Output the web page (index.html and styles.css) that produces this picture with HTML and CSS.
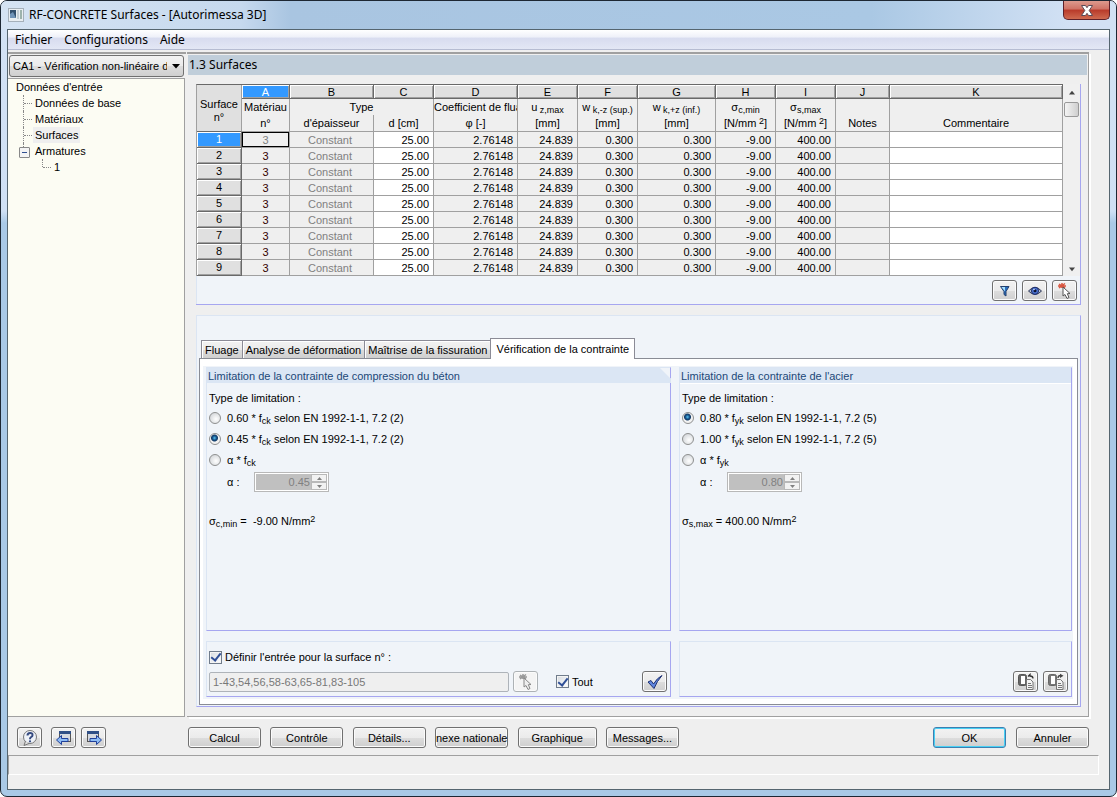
FILE: index.html
```html
<!DOCTYPE html>
<html lang="fr">
<head>
<meta charset="utf-8">
<title>RF-CONCRETE Surfaces - [Autorimessa 3D]</title>
<link rel="stylesheet" href="styles.css">
</head>
<body>
<div class="window">
  <header class="titlebar">
    <svg class="app-icon" width="16" height="14" viewBox="0 0 16 14"><rect x=".5" y=".5" width="15" height="13" fill="#e9eef2" stroke="#a5b0ba"/><rect x="2" y="2" width="6" height="8" fill="#33506f"/><path d="M2 10V6l3-2 3 6z" fill="#6f93b8"/><rect x="9" y="2" width="2" height="9" fill="#c2ccd3"/><rect x="12" y="2" width="2" height="9" fill="#9db3ac"/></svg>
    <h1>RF-CONCRETE Surfaces - [Autorimessa 3D]</h1>
    <button class="close" aria-label="Fermer"><svg width="12" height="11" viewBox="0 0 12 11"><path d="M.5.5h4L6 2.700 7.500.5h4L8.200 5.500l3.300 5h-4L6 8.300 4.500 10.500h-4l3.300-5z" fill="#fff" stroke="#5b4a56"/></svg></button>
  </header>
  <div class="client">
    <nav class="menubar"><button>Fichier</button><button>Configurations</button><button>Aide</button></nav>
    <div class="workspace">
      <aside class="sidebar">
        <div class="combo">
          <select aria-label="Cas de calcul"><option>CA1 - Vérification non-linéaire du</option></select>
          <svg width="8" height="5" viewBox="0 0 8 5"><path d="M0 0h8L4 4.500z" fill="#000"/></svg>
        </div>
        <div class="tree">
          <div class="node root">Données d'entrée</div>
          <ul>
            <li><span class="node">Données de base</span></li>
            <li><span class="node">Matériaux</span></li>
            <li><span class="node selected">Surfaces</span></li>
            <li class="open"><span class="node">Armatures</span>
              <ul><li><span class="node">1</span></li></ul>
            </li>
          </ul>
        </div>
      </aside>
      <main class="panel">
        <h2>1.3 Surfaces</h2>
        <section class="group data">
          <div class="grid-wrap">
            <table>
              <colgroup><col class="c45"><col class="c48"><col class="c84"><col class="c60"><col class="c84"><col class="c60"><col class="c60"><col class="c78"><col class="c60"><col class="c60"><col class="c54"><col></colgroup>
              <thead>
                <tr class="letters"><th rowspan="3" class="corner">Surface<br>n°</th><th class="on">A</th><th>B</th><th>C</th><th>D</th><th>E</th><th>F</th><th>G</th><th>H</th><th>I</th><th>J</th><th>K</th></tr>
                <tr class="names"><th>Matériau</th><th colspan="2">Type</th><th class="clip">Coefficient de flua</th><th>u<sub> z,max</sub></th><th>w<sub> k,-z (sup.)</sub></th><th>w<sub> k,+z (inf.)</sub></th><th>σ<sub>c,min</sub></th><th>σ<sub>s,max</sub></th><th></th><th></th></tr>
                <tr class="units"><th>n°</th><th>d'épaisseur</th><th>d [cm]</th><th>φ [-]</th><th>[mm]</th><th>[mm]</th><th>[mm]</th><th>[N/mm<sup> 2</sup>]</th><th>[N/mm<sup> 2</sup>]</th><th>Notes</th><th>Commentaire</th></tr>
              </thead>
              <tbody>
                <tr><th class="on">1</th><td class="focus">3</td><td>Constant</td><td>25.00</td><td>2.76148</td><td>24.839</td><td>0.300</td><td>0.300</td><td>-9.00</td><td>400.00</td><td></td><td></td></tr>
                <tr><th>2</th><td>3</td><td>Constant</td><td>25.00</td><td>2.76148</td><td>24.839</td><td>0.300</td><td>0.300</td><td>-9.00</td><td>400.00</td><td></td><td></td></tr>
                <tr><th>3</th><td>3</td><td>Constant</td><td>25.00</td><td>2.76148</td><td>24.839</td><td>0.300</td><td>0.300</td><td>-9.00</td><td>400.00</td><td></td><td></td></tr>
                <tr><th>4</th><td>3</td><td>Constant</td><td>25.00</td><td>2.76148</td><td>24.839</td><td>0.300</td><td>0.300</td><td>-9.00</td><td>400.00</td><td></td><td></td></tr>
                <tr><th>5</th><td>3</td><td>Constant</td><td>25.00</td><td>2.76148</td><td>24.839</td><td>0.300</td><td>0.300</td><td>-9.00</td><td>400.00</td><td></td><td></td></tr>
                <tr><th>6</th><td>3</td><td>Constant</td><td>25.00</td><td>2.76148</td><td>24.839</td><td>0.300</td><td>0.300</td><td>-9.00</td><td>400.00</td><td></td><td></td></tr>
                <tr><th>7</th><td>3</td><td>Constant</td><td>25.00</td><td>2.76148</td><td>24.839</td><td>0.300</td><td>0.300</td><td>-9.00</td><td>400.00</td><td></td><td></td></tr>
                <tr><th>8</th><td>3</td><td>Constant</td><td>25.00</td><td>2.76148</td><td>24.839</td><td>0.300</td><td>0.300</td><td>-9.00</td><td>400.00</td><td></td><td></td></tr>
                <tr><th>9</th><td>3</td><td>Constant</td><td>25.00</td><td>2.76148</td><td>24.839</td><td>0.300</td><td>0.300</td><td>-9.00</td><td>400.00</td><td></td><td></td></tr>
              </tbody>
            </table>
            <div class="scrollbar">
              <svg width="8" height="5" viewBox="0 0 8 5"><path d="M1 4.500h6L4 .8z" fill="#444"/></svg>
              <div class="thumb"></div>
              <svg class="down" width="8" height="5" viewBox="0 0 8 5"><path d="M1 .5h6L4 4.200z" fill="#444"/></svg>
            </div>
          </div>
          <div class="tools">
            <button class="icon" aria-label="Filtrer"><svg width="16" height="16" viewBox="0 0 16 16"><path d="M3.500 3.500h8.500L9 8.500V13L7 11.500V8.500z" fill="#2b6fc0" stroke="#24406e"/><path d="M4.500 4h3.500v4.500z" fill="#a9e0fb"/></svg></button>
            <button class="icon" aria-label="Afficher"><svg width="16" height="16" viewBox="0 0 16 16"><path d="M1.500 8Q8 .8 14.500 8 8 15 1.500 8z" fill="#b9c3d3" stroke="#2a3558"/><circle cx="8" cy="7.800" r="3.600" fill="#4a72d0" stroke="#1c2b66"/><circle cx="8" cy="7.800" r="1.500" fill="#0a102e"/><circle cx="7" cy="6.500" r=".8" fill="#cfe0ff"/></svg></button>
            <button class="icon" aria-label="Sélectionner"><svg width="16" height="18" viewBox="0 0 16 18"><path d="M2 2l6 4M8 1.500L2 6M5 1v5M1 4h8" stroke="#d8553f" stroke-width="1.500"/><path d="M6 5v9l2-1.500L10 16.500l2-1-1.700-3.800 2.700-.2z" fill="#fff" stroke="#555"/></svg></button>
          </div>
        </section>
        <section class="group details">
          <div class="tabs" role="tablist">
            <button role="tab">Fluage</button><button role="tab">Analyse de déformation</button><button role="tab">Maîtrise de la fissuration</button><button role="tab" class="active" aria-selected="true">Vérification de la contrainte</button>
          </div>
          <div class="page">
            <div class="page-grid">
              <fieldset class="box cut">
                <h3>Limitation de la contrainte de compression du béton</h3>
                <p>Type de limitation :</p>
                <label class="opt"><input type="radio" name="c"><span>0.60 * f<sub>ck</sub> selon EN 1992-1-1, 7.2 (2)</span></label>
                <label class="opt"><input type="radio" name="c" checked><span>0.45 * f<sub>ck</sub> selon EN 1992-1-1, 7.2 (2)</span></label>
                <label class="opt"><input type="radio" name="c"><span>α * f<sub>ck</sub></span></label>
                <div class="alpha"><label for="ac">α :</label><span class="spin"><input id="ac" value="0.45" disabled><span class="steps"><button disabled aria-label="Plus"><svg width="5" height="3" viewBox="0 0 5 3"><path d="M0 3h5L2.500 0z"/></svg></button><button disabled aria-label="Moins"><svg width="5" height="3" viewBox="0 0 5 3"><path d="M0 0h5L2.500 3z"/></svg></button></span></span></div>
                <p class="result">σ<sub>c,min</sub> = &nbsp;-9.00 N/mm<sup>2</sup></p>
              </fieldset>
              <fieldset class="box">
                <h3>Limitation de la contrainte de l'acier</h3>
                <p>Type de limitation :</p>
                <label class="opt"><input type="radio" name="s" checked><span>0.80 * f<sub>yk</sub> selon EN 1992-1-1, 7.2 (5)</span></label>
                <label class="opt"><input type="radio" name="s"><span>1.00 * f<sub>yk</sub> selon EN 1992-1-1, 7.2 (5)</span></label>
                <label class="opt"><input type="radio" name="s"><span>α * f<sub>yk</sub></span></label>
                <div class="alpha"><label for="as">α :</label><span class="spin"><input id="as" value="0.80" disabled><span class="steps"><button disabled aria-label="Plus"><svg width="5" height="3" viewBox="0 0 5 3"><path d="M0 3h5L2.500 0z"/></svg></button><button disabled aria-label="Moins"><svg width="5" height="3" viewBox="0 0 5 3"><path d="M0 0h5L2.500 3z"/></svg></button></span></span></div>
                <p class="result">σ<sub>s,max</sub> = 400.00 N/mm<sup>2</sup></p>
              </fieldset>
              <div class="box apply">
                <label class="tick"><input type="checkbox" checked><span>Définir l'entrée pour la surface n° :</span></label>
                <div class="apply-row">
                  <input class="list" aria-label="Surfaces" value="1-43,54,56,58-63,65-81,83-105" disabled>
                  <button class="icon" disabled aria-label="Choisir"><svg width="16" height="18" viewBox="0 0 16 18"><path d="M2 2l6 4M8 1.500L2 6M5 1v5M1 4h8" stroke="#999" stroke-width="1.500"/><path d="M6 5v9l2-1.500L10 16.500l2-1-1.700-3.800 2.700-.2z" fill="#eee" stroke="#888"/></svg></button>
                  <label class="tick all"><input type="checkbox" checked><span>Tout</span></label>
                  <button class="icon end" aria-label="Appliquer"><svg width="18" height="16" viewBox="0 0 18 16"><path d="M2 8l3-1.500 2.500 3.500Q11 4 16 1.500 11 7 8 14.500z" fill="#5f86e0" stroke="#1f3273"/></svg></button>
                </div>
              </div>
              <div class="box clip-tools">
                <button class="icon" aria-label="Copier"><svg width="18" height="18" viewBox="0 0 18 18"><rect x="1.500" y="1.500" width="8" height="11" rx="2" fill="#666" stroke="#555"/><rect x="4" y="3" width="4" height="8" fill="#fff"/><path d="M9.500 6.500h4l2.500 2.500v7.500H9.500z" fill="#f4f4f4" stroke="#777"/><path d="M11 10.500h3M11 12.500h4M11 14.500h4" stroke="#777"/><path d="M11 3.500l2-2v1.500c2 0 3 1 3 2.500" fill="none" stroke="#333" stroke-width="1.300"/></svg></button>
                <button class="icon" aria-label="Coller"><svg width="18" height="18" viewBox="0 0 18 18"><rect x="1.500" y="1.500" width="8" height="11" rx="2" fill="#777" stroke="#666"/><rect x="4" y="3" width="4" height="8" fill="#fff"/><path d="M9.500 6.500h4l2.500 2.500v7.500H9.500z" fill="#f4f4f4" stroke="#777"/><path d="M11 10.500h3M11 12.500h4M11 14.500h4" stroke="#777"/><path d="M11 5c0-2 1-2.500 2.500-2.500" fill="none" stroke="#444" stroke-width="1.300"/><path d="M13 .8l3.500 2L13 5z" fill="#444"/></svg></button>
              </div>
            </div>
          </div>
        </section>
      </main>
    </div>
    <footer class="actions">
      <div class="nav-tools">
        <button class="icon" aria-label="Aide"><svg width="18" height="18" viewBox="0 0 18 18"><circle cx="9" cy="8" r="6.500" fill="#eef2f8" stroke="#777"/><path d="M4.500 12L3 16.500l5-2" fill="#ddd" stroke="#777"/><path d="M6.500 6.500q0-2.500 2.600-2.500t2.400 2.200q0 1-1.300 1.800T9 10.200" fill="none" stroke="#354a80" stroke-width="2"/><circle cx="9" cy="12.300" r="1.100" fill="#354a80"/></svg></button>
        <button class="icon" aria-label="Précédent"><svg width="18" height="18" viewBox="0 0 18 18"><rect x="4.500" y="2.500" width="11" height="10" fill="#d5d9e0" stroke="#555"/><path d="M4 2h12v3H4z" fill="#2f4f86"/><path d="M1.500 11l5-4.500v3H13v3H6.500v3z" fill="#8dbcf5" stroke="#1f3f9a"/></svg></button>
        <button class="icon" aria-label="Suivant"><svg width="18" height="18" viewBox="0 0 18 18"><rect x="2.500" y="2.500" width="11" height="10" fill="#d5d9e0" stroke="#555"/><path d="M2 2h12v3H2z" fill="#2f4f86"/><path d="M16.500 11l-5-4.500v3H5v3h6.500v3z" fill="#8dbcf5" stroke="#1f3f9a"/></svg></button>
      </div>
      <div class="commands">
        <button class="btn">Calcul</button><button class="btn">Contrôle</button><button class="btn">Détails...</button><button class="btn">nexe nationale</button><button class="btn wide">Graphique</button><button class="btn">Messages...</button>
      </div>
      <div class="confirm"><button class="btn default">OK</button><button class="btn">Annuler</button></div>
    </footer>
    <div class="status"></div>
  </div>
</div>
</body>
</html>
```

FILE: styles.css
```css
* { box-sizing: border-box; }
body { margin: 0; background: #fff; color: #000; font: 11px/16px "Liberation Sans", Arial, sans-serif; }
button, input, select { font: inherit; color: inherit; margin: 0; padding: 0; }
h1, h2, h3, p, ul { margin: 0; padding: 0; font-size: 11px; font-weight: normal; }
ul { list-style: none; }
svg { display: block; flex: none; }
sub, sup { font-size: 9px; line-height: 0; }
sub { vertical-align: -2px; }
sup { vertical-align: 3px; }

.window {
  height: 100vh; display: flex; flex-direction: column; padding: 0 6px 6px;
  border: 1px solid #1d2733; border-radius: 7px; overflow: hidden;
  background: linear-gradient(#d3e2f4 0, #cfe0f4 210px, #a9c9e6 222px, #a9c9e6 100%);
}
.titlebar {
  flex: none; height: 28px; margin: 0 -6px; padding: 0 6px 0 7px; display: flex; align-items: center; gap: 5px;
  background: linear-gradient(90deg, #d5e3f3 0, #c6d9ee 240px, #a9c5e1 290px, #aac8e4 78%, #d2e1f4 96%);
}
.titlebar h1 { font: 12px/18px "Noto Sans", "Open Sans", sans-serif; }
.close {
  margin-left: auto; align-self: flex-start; width: 47px; height: 19px; display: grid; place-items: center;
  border: 1px solid #5e2029; border-top: 0; border-radius: 0 0 5px 5px;
  background: linear-gradient(#dd9a8e 0, #cf7265 45%, #b83a2a 50%, #cf6a50 100%);
}
.client {
  flex: 1; min-height: 0; display: flex; flex-direction: column;
  border: 1px solid #55656f; background: #efefef;
}
.menubar {
  flex: none; height: 20px; display: flex; gap: 12px; padding-left: 7px; border-bottom: 1px solid #b6bcd2;
  background: linear-gradient(#fff 0, #eff1f9 35%, #d8dcef 45%, #e3e7f5 100%);
}
.menubar button { border: 0; background: none; font: 12px/18px "Noto Sans", "Open Sans", sans-serif; }
.workspace { flex: 1; min-height: 0; display: flex; gap: 1px; margin-top: 2px; }

.sidebar { flex: none; width: 178px; display: flex; flex-direction: column; border-top: 2px solid #a0a0a0; }
.combo { position: relative; margin: 1px 2px 1px 1px; }
.combo select {
  display: block; width: 100%; height: 22px; padding: 0 16px 0 3px; appearance: none;
  border: 1px solid #707070; border-radius: 3px; background: linear-gradient(#f2f2f2 0, #ebebeb 50%, #dddddd 51%, #cfcfcf 100%);
}
.combo svg { position: absolute; right: 4px; top: 9px; pointer-events: none; }
.tree { flex: 1; margin-right: 1px; padding-left: 8px; border: solid #a0a0a0; border-width: 1px 1px 1px 0; background: #fcfcf3; }
.node { display: inline-block; padding: 0 2px; }
.root { display: block; padding-left: 0; }
.tree li { position: relative; padding-left: 17px; }
.tree li::before { content: ""; position: absolute; left: 7px; top: 0; height: 100%; border-left: 1px dotted #888; }
.tree li::after { content: ""; position: absolute; left: 8px; top: 8px; width: 8px; border-top: 1px dotted #888; }
.tree li:last-child::before { height: 8px; }
.tree .open::after {
  left: 3px; top: 4px; width: 9px; height: 9px; border: 1px solid #888; border-radius: 1px;
  background: linear-gradient(#305090, #305090) 50% 50% / 5px 1px no-repeat #f4f4f4;
}
.tree li li { margin-left: 2px; }
.tree li li::after { left: 8px; top: 8px; width: 8px; height: 0; }
.selected { background: #efefef; }

.panel {
  flex: 1; min-width: 0; display: flex; flex-direction: column; margin-right: 20px; padding: 1px 0 9px;
  border-top: 2px solid #a0a0a0; border-right: 1px solid #a0a0a0; border-bottom: 1px solid #a0a0a0;
  box-shadow: 2px 2px 0 #fff;
}
.panel h2 { flex: none; height: 20px; margin: 0 1px; padding-left: 1px; background: #c0ceda; font: 12px/20px "Noto Sans", "Open Sans", sans-serif; }
.group { margin: 0 7px 0 9px; background: #f0f4f9; border: 1px solid #dbe5f3; border-right-color: #a6a6f0; border-bottom-color: #a6a6f0; }
.data { flex: none; margin-top: 9px; border-top: 0; border-left: 0; }
.details { flex: 1; min-height: 0; display: flex; flex-direction: column; margin-top: 10px; padding: 22px 2px 1px; }

.grid-wrap { display: flex; background: #efefef; }
table { flex: 1; width: 0; table-layout: fixed; border-collapse: separate; border-spacing: 0; border-left: 1px solid #a0a0a0; border-top: 1px solid #696969; line-height: 15px; }
.c45 { width: 45px; } .c48 { width: 48px; } .c54 { width: 54px; } .c60 { width: 60px; } .c78 { width: 78px; } .c84 { width: 84px; }
th, td { height: 16px; padding: 0; font-weight: normal; border-right: 1px solid #a0a0a0; border-bottom: 1px solid #a0a0a0; white-space: nowrap; overflow: hidden; background: #efefef; }
td { padding-top: 1px; line-height: 14px; }
thead .letters th { height: 14px; line-height: 12px; background: #e0e0e0; border-color: #696969; box-shadow: inset 1px 1px #fff, inset -1px -1px #a0a0a0; }
thead .letters .corner { padding-top: 6px; line-height: 13px; border-color: #a0a0a0; border-bottom-color: #696969; box-shadow: none; }
thead .letters .on, tbody .on { background: #3399ff; color: #fff; }
thead .names th { height: 16px; line-height: 16px; border-bottom: 0; }
thead .units th { height: 17px; }
.names .clip { text-align: left; }
tbody th { background: #e0e0e0; line-height: 13px; border-color: #696969; box-shadow: inset 1px 1px #fff, inset -1px -1px #a0a0a0; }
td { text-align: right; padding-right: 4px; }
td:nth-child(2), td:nth-child(3) { text-align: center; padding-right: 0; }
td:nth-child(3) { color: #808080; padding-right: 3px; }
td:nth-child(4), td:nth-child(12) { background: #fff; }
td:nth-child(2) { color: #300; }
td.focus { color: #808080; box-shadow: inset 0 0 0 1px #000; }
.scrollbar { flex: none; width: 17px; padding: 6px 1px 4px; display: flex; flex-direction: column; align-items: center; background: #f0f0f0; }
.thumb { width: 15px; height: 15px; margin-top: 7px; border: 1px solid #999; border-radius: 2px; background: linear-gradient(90deg, #f4f4f4, #cfcfcf); }
.down { margin-top: auto; }
.tools { display: flex; justify-content: flex-end; gap: 5px; padding: 4px 3px 3px; border-left: 1px solid #dbe5f3; }

.icon, .btn {
  flex: none; height: 21px; display: flex; align-items: center; justify-content: center;
  border: 1px solid #707070; border-radius: 3px; box-shadow: inset 0 0 0 1px #fbfbfb;
  background: linear-gradient(#f2f2f2 0, #ebebeb 50%, #dddddd 51%, #cfcfcf 100%);
}
.icon { width: 25px; }
.icon:disabled { border-color: #adb2b5; background: #f4f4f4; }
.btn { width: 73px; white-space: nowrap; }
.wide { width: 79px; }
.default { border-color: #3c7fb1; box-shadow: inset 0 0 0 1px #48d0f4; }

.tabs { flex: none; display: flex; align-items: flex-end; padding-left: 2px; }
.tabs button { height: 18px; padding: 0 3px; margin-right: -1px; border: 1px solid #8b8b96; border-bottom: 0; background: linear-gradient(#f2f2f2 0, #ebebeb 50%, #dddddd 51%, #cfcfcf 100%); box-shadow: inset 1px 1px #fff; white-space: nowrap; }
.tabs .active { position: relative; height: 21px; margin-bottom: -1px; padding: 0 5px; background: #fff; }
.page { flex: 1; min-height: 0; display: flex; padding: 7px 4px 5px 3px; border: 1px solid #898c95; background: #fff; }
.page-grid { flex: 1; display: grid; grid-template-columns: 465fr 393fr; grid-template-rows: 1fr 56px; gap: 10px 8px; padding: 1px 1px 2px 3px; background: #f0f4f9; }
.box { min-width: 0; margin: 0; padding: 0; border: 1px solid #dbe5f3; border-right-color: #a6a6f0; border-bottom-color: #a6a6f0; }
.box h3 { height: 15px; padding-left: 1px; line-height: 16px; color: #1c4878; background: #dbe6f4; box-shadow: 0 1px #fff; }
.cut h3 { margin-right: -1px; clip-path: polygon(0 0, calc(100% - 11px) 0, 100% 11px, 100% 100%, 0 100%); }
.box p { padding: 7px 0 1px 2px; }
.opt { display: flex; align-items: center; gap: 6px; height: 21px; padding-left: 2px; white-space: pre; }
.opt input { appearance: none; width: 12px; height: 12px; border: 1px solid #8e8f8f; border-radius: 50%; background: radial-gradient(circle at 60% 60%, #fff, #c8ccd0); }
.opt input:checked { background: radial-gradient(circle at 45% 40%, #59c4f2 0, #15548c 2px, #123a66 3px, #f2f2f2 4px); }
.alpha { display: flex; align-items: center; padding: 2px 0 0 20px; }
.alpha label { width: 27px; }
.spin { display: flex; width: 75px; height: 20px; padding: 1px; border: 1px solid #b8b8b8; background: #fff; }
.spin input { flex: 1; min-width: 0; border: 0; background: #c0c0c0; color: #808080; text-align: right; padding-right: 1px; }
.steps { display: flex; flex-direction: column; width: 16px; }
.steps button { flex: 1; min-height: 0; display: grid; place-items: center; border: 1px solid #b8b8b8; background: #f2f2f2; }
.steps path { fill: #808080; }
.box .result { padding-top: 21px; }

.apply { padding: 7px 3px 4px 2px; display: flex; flex-direction: column; justify-content: space-between; }
.tick { display: flex; align-items: center; gap: 3px; }
.tick input { appearance: none; width: 13px; height: 13px; border: 1px solid #707c8c; background: linear-gradient(135deg, #d5dae0, #fff); box-shadow: inset 0 0 0 1px #f4f4f4; display: grid; place-items: center; }
.tick input:checked::after { content: ""; width: 4px; height: 8px; margin-top: -2px; border: solid #2f4f97; border-width: 0 2px 2px 0; transform: rotate(38deg); }
.apply-row { display: flex; align-items: center; }
.list { flex: 0 1 300px; min-width: 0; height: 20px; padding: 0 3px; border: 1px solid #aeb3b9; border-radius: 2px; background: #efefef; color: #787878; margin-right: 4px; }
.all { margin-left: 18px; }
.end { margin-left: auto; }
.clip-tools { display: flex; align-items: flex-end; justify-content: flex-end; gap: 5px; padding: 0 3px 4px; }

.actions { flex: none; height: 38px; display: flex; align-items: center; padding: 3px 20px 0 9px; }
.nav-tools { display: flex; gap: 5px; width: 171px; }
.nav-tools .icon:first-child { margin-right: 4px; }
.commands { display: flex; justify-content: space-between; width: 491px; }
.confirm { display: flex; gap: 10px; margin-left: auto; }
.status { flex: none; height: 20px; margin: 0 10px 14px 0; border: 1px solid #a0a0a0; border-right-color: #fff; border-bottom-color: #fff; }
```
